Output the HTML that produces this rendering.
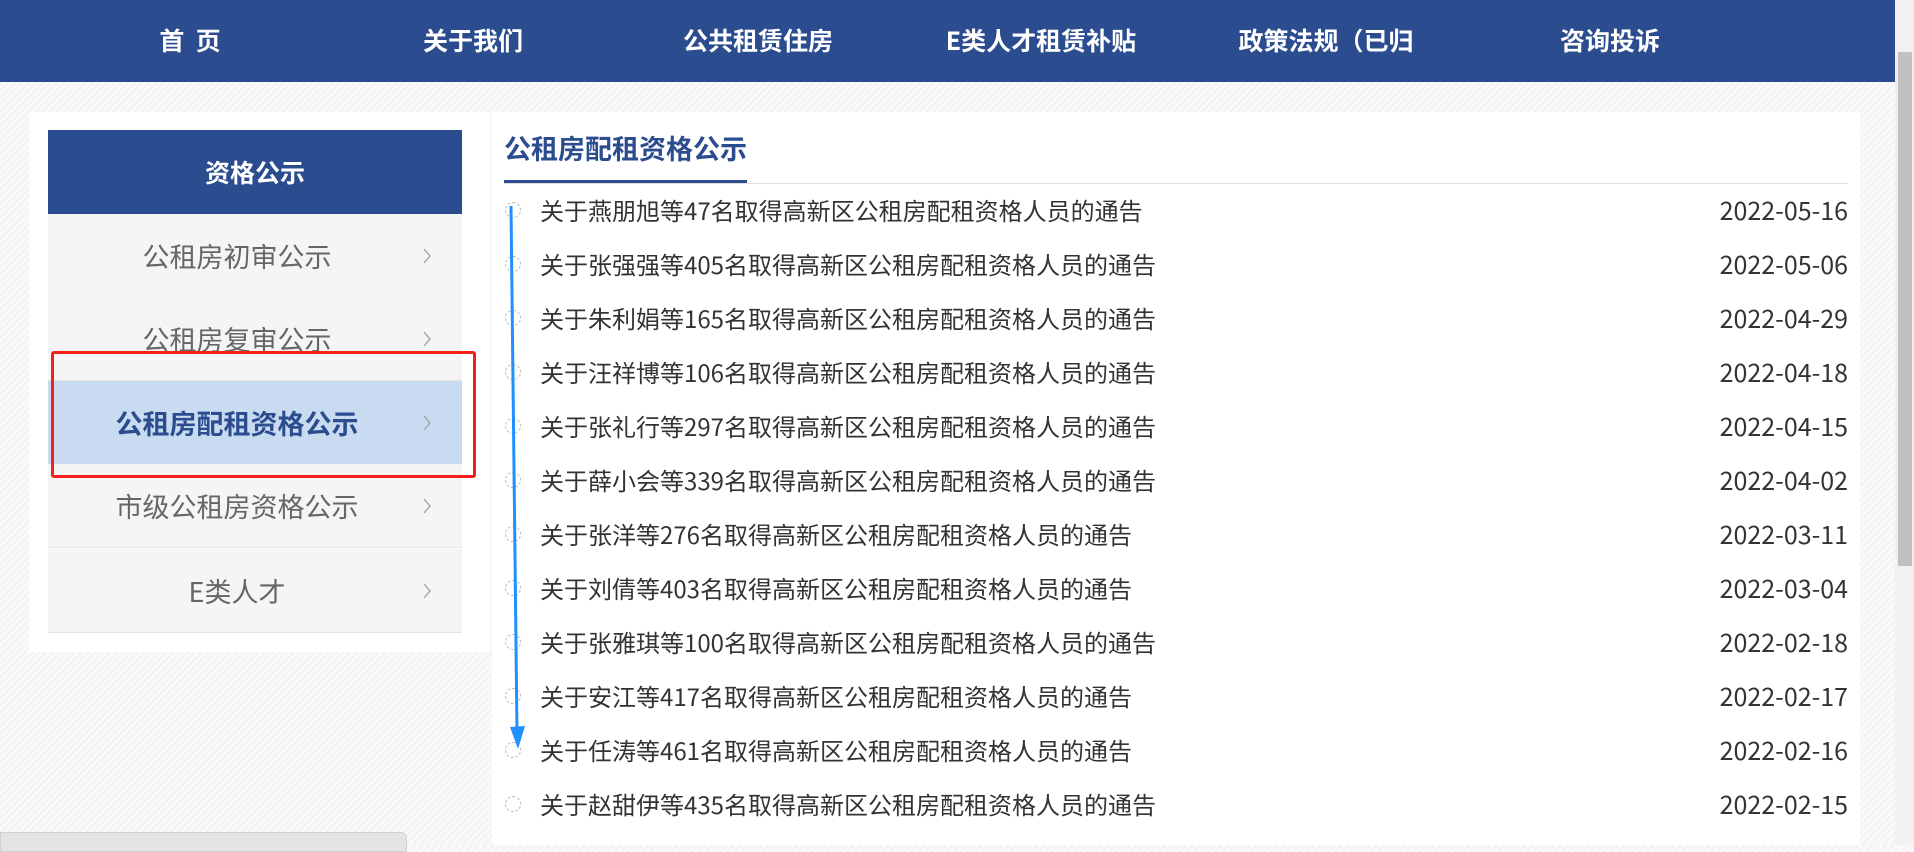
<!DOCTYPE html>
<html><head><meta charset="utf-8"><style>
*{margin:0;padding:0;box-sizing:border-box}
body{width:1914px;height:845px;overflow:hidden;position:relative;font-family:"Liberation Sans","Noto Sans CJK SC",sans-serif;background:repeating-linear-gradient(135deg,#fafafa 0 3px,#f2f2f2 3px 5px);}
.hdr{position:absolute;left:0;top:0;width:1895px;height:82px;background:#2b4d8f}
.nav{position:absolute;top:22px;color:#fff;font-weight:bold;font-size:25px;line-height:36px;transform:translateX(-50%);white-space:nowrap;font-family:"Noto Sans CJK SC",sans-serif}
.sb{position:absolute;left:1895px;top:0;width:19px;height:845px;background:#f1f1f1}
.thumb{position:absolute;left:1898px;top:52px;width:14px;height:514px;background:#c1c1c1}
.lbox{position:absolute;left:29px;top:112px;width:461px;height:540px;background:#fff}
.shead{position:absolute;left:48px;top:130px;width:414px;height:84px;background:#2b4d8f;color:#fff;font-weight:bold;font-size:25px;text-align:center;line-height:84px;font-family:"Noto Sans CJK SC",sans-serif}
.item{position:absolute;left:48px;width:414px;height:84px;background:#f5f5f5;border-bottom:1px solid #e4e4e4;color:#666;font-size:27px;line-height:84px;text-align:center;padding-right:36px;font-family:"Noto Sans CJK SC",sans-serif}
.item svg{position:absolute;right:30px;top:33px}
.item.act{background:#c9dbf0;color:#2b4d8f;font-weight:bold}
.red{position:absolute;left:51px;top:351px;width:425px;height:127px;border:3px solid #f5201b;border-radius:3px}
.rbox{position:absolute;left:492px;top:112px;width:1368px;height:733px;background:#fff}
.title{position:absolute;left:504px;top:130px;font-size:27px;font-weight:bold;color:#2b4d8f;line-height:36px;font-family:"Noto Sans CJK SC",sans-serif}
.gl{position:absolute;left:504px;top:183px;width:1344px;height:1px;background:#e0e0e0}
.bl{position:absolute;left:504px;top:180px;width:243px;height:3px;background:#2b4d8f}
.row{position:absolute;left:504px;width:1344px;height:40px;font-size:24px;color:#333;line-height:40px;font-family:"Noto Sans CJK SC",sans-serif}
.row .c{position:absolute;left:1px;top:12px;width:16px;height:16px;border:1px dashed #bbb;border-radius:50%}
.row .t{position:absolute;left:36px}
.row .d{position:absolute;right:0;font-size:25px}
.status{position:absolute;left:0;top:832px;width:407px;height:20px;background:#e4e4e4;border-radius:0 6px 0 0;border:1px solid #d0d0d0}
</style></head><body>
<div class="hdr"></div>
<div class="nav" style="left:190px">首&nbsp;&nbsp;页</div>
<div class="nav" style="left:473px">关于我们</div>
<div class="nav" style="left:758px">公共租赁住房</div>
<div class="nav" style="left:1041px">E类人才租赁补贴</div>
<div class="nav" style="left:1326px">政策法规（已归</div>
<div class="nav" style="left:1610px">咨询投诉</div>
<div class="sb"></div><div class="thumb"></div>
<div class="lbox"></div>
<div class="shead">资格公示</div>
<div class="item" style="top:214px">公租房初审公示<svg width="10" height="18"><path d="M2 2 L8 9 L2 16" fill="none" stroke="#aaa" stroke-width="1.5"/></svg></div>
<div class="item" style="top:297px">公租房复审公示<svg width="10" height="18"><path d="M2 2 L8 9 L2 16" fill="none" stroke="#aaa" stroke-width="1.5"/></svg></div>
<div class="item act" style="top:381px">公租房配租资格公示<svg width="10" height="18"><path d="M2 2 L8 9 L2 16" fill="none" stroke="#aaa" stroke-width="1.5"/></svg></div>
<div class="item" style="top:464px">市级公租房资格公示<svg width="10" height="18"><path d="M2 2 L8 9 L2 16" fill="none" stroke="#aaa" stroke-width="1.5"/></svg></div>
<div class="item" style="top:549px">E类人才<svg width="10" height="18"><path d="M2 2 L8 9 L2 16" fill="none" stroke="#aaa" stroke-width="1.5"/></svg></div>
<div class="red"></div>
<div class="rbox"></div>
<div class="title">公租房配租资格公示</div>
<div class="gl"></div><div class="bl"></div>
<div class="row" style="top:190px"><span class="c"></span><span class="t">关于燕朋旭等47名取得高新区公租房配租资格人员的通告</span><span class="d">2022-05-16</span></div>
<div class="row" style="top:244px"><span class="c"></span><span class="t">关于张强强等405名取得高新区公租房配租资格人员的通告</span><span class="d">2022-05-06</span></div>
<div class="row" style="top:298px"><span class="c"></span><span class="t">关于朱利娟等165名取得高新区公租房配租资格人员的通告</span><span class="d">2022-04-29</span></div>
<div class="row" style="top:352px"><span class="c"></span><span class="t">关于汪祥博等106名取得高新区公租房配租资格人员的通告</span><span class="d">2022-04-18</span></div>
<div class="row" style="top:406px"><span class="c"></span><span class="t">关于张礼行等297名取得高新区公租房配租资格人员的通告</span><span class="d">2022-04-15</span></div>
<div class="row" style="top:460px"><span class="c"></span><span class="t">关于薛小会等339名取得高新区公租房配租资格人员的通告</span><span class="d">2022-04-02</span></div>
<div class="row" style="top:514px"><span class="c"></span><span class="t">关于张洋等276名取得高新区公租房配租资格人员的通告</span><span class="d">2022-03-11</span></div>
<div class="row" style="top:568px"><span class="c"></span><span class="t">关于刘倩等403名取得高新区公租房配租资格人员的通告</span><span class="d">2022-03-04</span></div>
<div class="row" style="top:622px"><span class="c"></span><span class="t">关于张雅琪等100名取得高新区公租房配租资格人员的通告</span><span class="d">2022-02-18</span></div>
<div class="row" style="top:676px"><span class="c"></span><span class="t">关于安江等417名取得高新区公租房配租资格人员的通告</span><span class="d">2022-02-17</span></div>
<div class="row" style="top:730px"><span class="c"></span><span class="t">关于任涛等461名取得高新区公租房配租资格人员的通告</span><span class="d">2022-02-16</span></div>
<div class="row" style="top:784px"><span class="c"></span><span class="t">关于赵甜伊等435名取得高新区公租房配租资格人员的通告</span><span class="d">2022-02-15</span></div>
<svg style="position:absolute;left:0;top:0" width="1914" height="845"><line x1="511" y1="206" x2="517" y2="732" stroke="#1e90ff" stroke-width="3"/><path d="M510 727 L518 749 L525 726 Z" fill="#1e90ff"/></svg>
<div class="status"></div>
</body></html>
